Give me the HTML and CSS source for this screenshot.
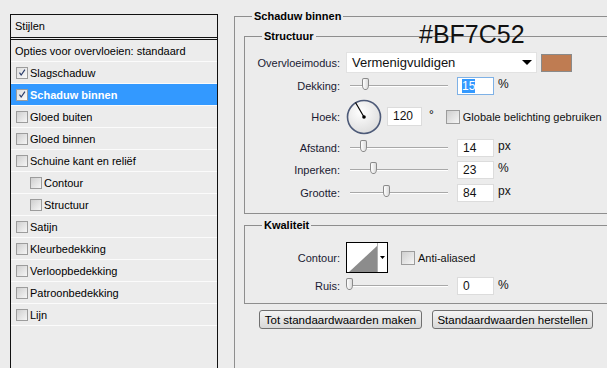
FILE: index.html
```html
<!DOCTYPE html>
<html lang="nl">
<head>
    <meta charset="UTF-8">
    <title>Laagstijl - Schaduw binnen</title>
    <link rel="stylesheet" href="styles.css">
</head>
<body>
<div class="dialog">
    <!-- Stijlen lijst -->
    <div class="styles-list">
        <div class="list-head">Stijlen</div>
        <div class="list-row blend">Opties voor overvloeien: standaard</div>
        <div class="list-row">
            <span class="check small on"><svg viewBox="0 0 12 12" width="12" height="12"><path d="M3 6.2 L5 9 L9.5 2.5" fill="none" stroke="#2b3d6b" stroke-width="1.4"/></svg></span>
            Slagschaduw
        </div>
        <div class="list-row active">
            <span class="check small on"><svg viewBox="0 0 12 12" width="12" height="12"><path d="M3 6.2 L5 9 L9.5 2.5" fill="none" stroke="#2b3d6b" stroke-width="1.4"/></svg></span>
            Schaduw binnen
        </div>
        <div class="list-row"><span class="check small"></span>Gloed buiten</div>
        <div class="list-row"><span class="check small"></span>Gloed binnen</div>
        <div class="list-row"><span class="check small"></span>Schuine kant en reliëf</div>
        <div class="list-row sub"><span class="check small"></span>Contour</div>
        <div class="list-row sub"><span class="check small"></span>Structuur</div>
        <div class="list-row"><span class="check small"></span>Satijn</div>
        <div class="list-row"><span class="check small"></span>Kleurbedekking</div>
        <div class="list-row"><span class="check small"></span>Verloopbedekking</div>
        <div class="list-row"><span class="check small"></span>Patroonbedekking</div>
        <div class="list-row"><span class="check small"></span>Lijn</div>
    </div>

    <!-- Instellingen -->
    <div class="settings">
        <fieldset class="group outer">
            <legend>Schaduw binnen</legend>

            <fieldset class="group structure">
                <legend>Structuur</legend>
                <div class="form-grid structure-grid">
                    <label>Overvloeimodus:</label>
                    <div class="control">
                        <div class="select">Vermenigvuldigen<span class="arrow"></span></div>
                        <span class="swatch"></span>
                    </div>

                    <label>Dekking:</label>
                    <div class="control">
                        <div class="track"><span class="thumb" style="left: 12px"></span></div>
                        <div class="field focus"><span class="selected">15</span></div>
                        <span class="unit">%</span>
                    </div>

                    <label>Hoek:</label>
                    <div class="control">
                        <svg class="dial" viewBox="0 0 36 36" width="36" height="36">
                            <defs>
                                <radialGradient id="dialFill" cx="40%" cy="35%" r="70%">
                                    <stop offset="0" stop-color="#ffffff"/>
                                    <stop offset="1" stop-color="#dcdcdc"/>
                                </radialGradient>
                            </defs>
                            <circle cx="18" cy="18" r="16.5" fill="url(#dialFill)" stroke="#4d5a78" stroke-width="1.6"/>
                            <line x1="18" y1="18" x2="9.5" y2="3.5" stroke="#000" stroke-width="1.2"/>
                            <circle cx="18" cy="18" r="1.8" fill="#000"/>
                        </svg>
                        <div class="field angle">120</div>
                        <span class="degree">°</span>
                        <span class="check big"></span>
                        <span class="check-label">Globale belichting gebruiken</span>
                    </div>

                    <label>Afstand:</label>
                    <div class="control">
                        <div class="track"><span class="thumb" style="left: 10px"></span></div>
                        <div class="field">14</div>
                        <span class="unit">px</span>
                    </div>

                    <label>Inperken:</label>
                    <div class="control">
                        <div class="track"><span class="thumb" style="left: 20px"></span></div>
                        <div class="field">23</div>
                        <span class="unit">%</span>
                    </div>

                    <label>Grootte:</label>
                    <div class="control">
                        <div class="track"><span class="thumb" style="left: 33px"></span></div>
                        <div class="field">84</div>
                        <span class="unit">px</span>
                    </div>
                </div>
            </fieldset>

            <fieldset class="group quality">
                <legend>Kwaliteit</legend>
                <div class="form-grid quality-grid">
                    <label>Contour:</label>
                    <div class="control">
                        <svg class="contour" viewBox="0 0 42 31" width="42" height="31">
                            <rect x="0.5" y="0.5" width="41" height="30" fill="#fff" stroke="#000"/>
                            <polygon points="3,30 31,4 31,30" fill="#8c8c8c"/>
                            <line x1="31.5" y1="1" x2="31.5" y2="30" stroke="#b0b0b0"/>
                            <polygon points="34,14 39,14 36.5,17" fill="#000"/>
                        </svg>
                        <span class="check big aa"></span>
                        <span class="check-label">Anti-aliased</span>
                    </div>

                    <label>Ruis:</label>
                    <div class="control">
                        <div class="track"><span class="thumb" style="left: -4px"></span></div>
                        <div class="field">0</div>
                        <span class="unit">%</span>
                    </div>
                </div>
            </fieldset>

            <div class="actions">
                <button class="btn-make" type="button">Tot standaardwaarden maken</button>
                <button class="btn-reset" type="button">Standaardwaarden herstellen</button>
            </div>
        </fieldset>
    </div>

    <div class="hex-note">#BF7C52</div>
</div>
</body>
</html>
```

FILE: styles.css
```css
body {
    margin: 0;
    width: 607px;
    height: 368px;
    overflow: hidden;
    background-color: #ececec;
    font-family: "Liberation Sans", Arial, sans-serif;
    font-size: 11px;
    color: #000;
}

.dialog {
    position: relative;
    display: flex;
    align-items: flex-start;
    padding: 9px 0 0 10px;
}

/* Stijlen lijst links */
.styles-list {
    width: 206px;
    height: 353px;
    margin-top: 5px;
    border: 1px solid #111;
    border-bottom: 0;
    flex-shrink: 0;
}

.list-head {
    height: 22px;
    line-height: 22px;
    padding-left: 4px;
    border-bottom: 3px double #111;
}

.list-row {
    display: flex;
    align-items: center;
    gap: 2px;
    height: 21px;
    padding-left: 5px;
    border-bottom: 1px solid #fbfbfb;
}

.list-row.blend {
    padding-left: 4px;
}

.list-row.sub {
    padding-left: 19px;
}

.list-row.active {
    background-color: #3399ff;
    color: #fff;
    font-weight: bold;
}

/* Checkboxes */
.check {
    display: inline-flex;
    align-items: center;
    justify-content: center;
    box-sizing: border-box;
    border: 1px solid #9c9c9c;
    background: linear-gradient(135deg, #cfcfcf, #f6f6f6);
    flex-shrink: 0;
}

.check.small {
    width: 12px;
    height: 12px;
}

.check.small svg {
    width: 11px;
    height: 11px;
}

.check.on {
    background: linear-gradient(135deg, #dedede, #fafafa);
}

.check.big {
    width: 14px;
    height: 14px;
    margin-left: 12px;
}

.check-label {
    margin-left: 3px;
    color: #111;
}

/* Instellingen rechts */
.settings {
    margin-left: 16px;
    width: 400px;
    flex-shrink: 0;
}

fieldset.group {
    margin: 0;
    padding: 0;
    min-width: 0;
    border: 1px solid #8e8e8e;
}

fieldset.group legend {
    margin-left: 17px;
    padding: 0 2px;
    line-height: 14px;
    font-weight: bold;
    color: #000;
}

fieldset.outer {
    height: 359px;
    box-sizing: border-box;
    border-bottom: 0;
}

fieldset.structure {
    margin: 6px 0 0 9px;
}

fieldset.quality {
    margin: 4px 0 0 9px;
}

.form-grid {
    display: grid;
    grid-template-columns: 95px 1fr;
    column-gap: 6px;
    align-items: center;
}

.structure-grid {
    grid-template-rows: 23px 23px 39px 23px 21px 25px;
    padding: 8px 0 8px;
}

.quality-grid {
    grid-template-rows: 33px 24px;
    padding: 9px 0 5px;
}

.form-grid label {
    text-align: right;
    color: #1a1a33;
}

.control {
    display: flex;
    align-items: center;
}

/* Keuzelijst */
.select {
    box-sizing: border-box;
    width: 191px;
    height: 21px;
    display: flex;
    align-items: center;
    justify-content: space-between;
    padding: 0 4px 0 5px;
    background-color: #fff;
    border: 1px solid #e2e2e2;
    font-size: 13px;
    color: #111;
}

.arrow {
    width: 0;
    height: 0;
    border-left: 5px solid transparent;
    border-right: 5px solid transparent;
    border-top: 5px solid #000;
}

.swatch {
    box-sizing: border-box;
    width: 31px;
    height: 18px;
    margin-left: 4px;
    background-color: #bf7c52;
    border: 1px solid #8a8a8a;
}

/* Schuifregelaars */
.track {
    position: relative;
    width: 98px;
    height: 1px;
    margin-left: 4px;
    border-top: 1px solid #a8a8a8;
    background-color: #fff;
}

.thumb {
    position: absolute;
    top: -8px;
    width: 7px;
    height: 12px;
    box-sizing: border-box;
    border: 1px solid #8a8a8a;
    border-radius: 2px 2px 3px 3px / 2px 2px 5px 5px;
    background: linear-gradient(90deg, #ffffff, #dadada);
}

.field {
    box-sizing: border-box;
    width: 37px;
    height: 18px;
    margin-left: 9px;
    padding-left: 5px;
    line-height: 16px;
    background-color: #fff;
    border: 1px solid #dcdcdc;
    font-size: 12px;
    color: #111;
}

.field.focus {
    border-color: #7eb1e6;
    padding-left: 4px;
}

.selected {
    background-color: #3399ff;
    color: #fff;
}

.field.angle {
    width: 35px;
    height: 19px;
    line-height: 17px;
    margin-left: 5px;
}

.unit {
    margin-left: 4px;
    margin-top: -3px;
    font-size: 12px;
    color: #111;
}

.degree {
    margin-left: 7px;
    margin-top: -4px;
    font-size: 12px;
}

.dial {
    display: block;
}

.contour {
    display: block;
}

.check.aa {
    margin-left: 13px;
}

/* Knoppen */
.actions {
    display: flex;
    gap: 10px;
    margin: 6px 0 0 24px;
}

.actions button {
    height: 19px;
    padding: 0;
    border: 1px solid #707070;
    border-radius: 3px;
    background: linear-gradient(#f4f4f4, #e6e6e6 50%, #d8d8d8);
    font-family: "Liberation Sans", Arial, sans-serif;
    font-size: 11.5px;
    color: #000;
}

.btn-make {
    width: 163px;
}

.btn-reset {
    width: 161px;
}

/* Kleurcode annotatie */
.hex-note {
    position: absolute;
    left: 419px;
    top: 22px;
    font-family: "Liberation Sans", Arial, sans-serif;
    font-size: 25px;
    line-height: 25px;
    color: #111;
}
```
